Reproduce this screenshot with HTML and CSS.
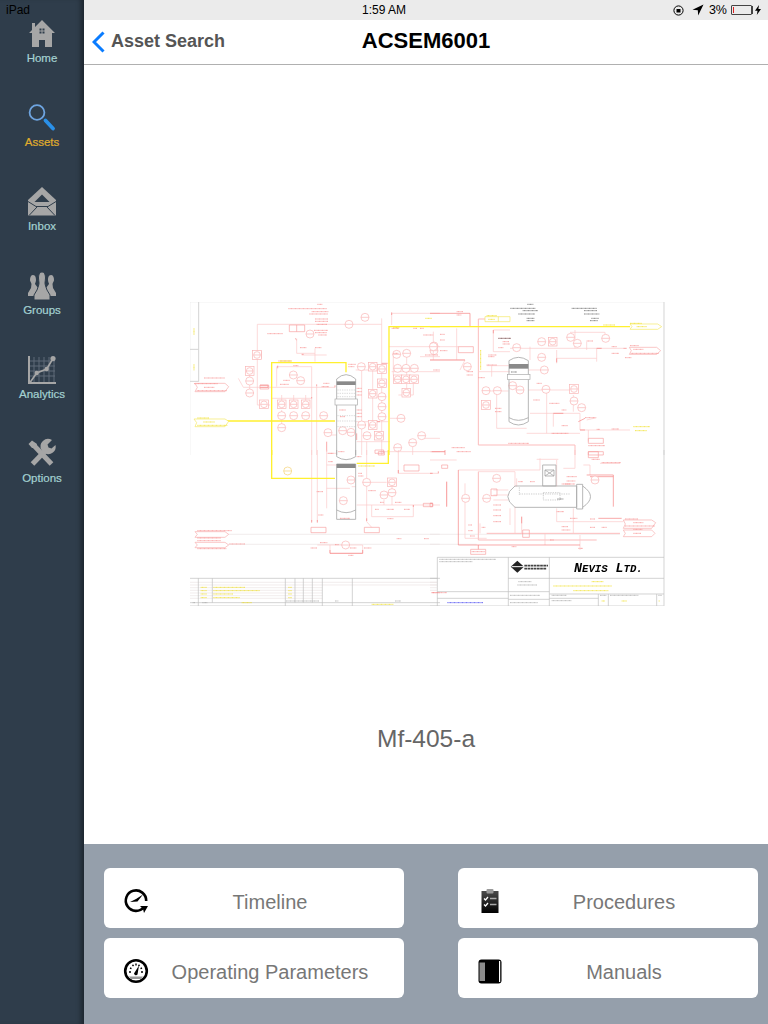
FILE: index.html
```html
<!DOCTYPE html>
<html lang="en">
<head>
    <meta charset="UTF-8">
    <meta name="viewport" content="width=device-width, initial-scale=1.0">
    <title>ACSEM6001</title>
    <link rel="stylesheet" href="styles.css">
</head>
<body>
    <div class="device-name">iPad</div>

    <nav class="sidebar">
        <a class="side-item">
            <svg class="side-icon" viewBox="0 0 28 28">
                <path class="icon-grey" d="M14 0 L27 13 H24 V27 H17 V20 H11 V27 H4 V13 H1 L4 10 V3 H7 V7 Z"/>
                <path class="icon-hole" d="M11.500 8.500h2v2h-2zM14.500 8.500h2v2h-2zM11.500 11.500h2v2h-2zM14.500 11.500h2v2h-2z"/>
            </svg>
            <span class="side-label">Home</span>
        </a>
        <a class="side-item side-item-active">
            <svg class="side-icon" viewBox="0 0 28 28">
                <circle class="search-ring" cx="9" cy="8.500" r="7.400"/>
                <path class="search-handle" d="M17.500 16.500 L25 24.500"/>
            </svg>
            <span class="side-label">Assets</span>
        </a>
        <a class="side-item">
            <svg class="side-icon" viewBox="0 0 28 28">
                <path class="icon-grey" d="M14 -1 L28 12 V27.500 H0 V12 Z"/>
                <path class="icon-hole" d="M14 6.500 L21.500 14 H6.500 Z"/>
                <path class="icon-line" d="M0 13.500 L8 18.500 H20 L28 13.500 M1 27.500 L9 19 M27 27.500 L19 19"/>
            </svg>
            <span class="side-label">Inbox</span>
        </a>
        <a class="side-item">
            <svg class="side-icon" viewBox="0 0 28 28">
                <path class="icon-grey" d="M5 3 C7.500 3 8 6 8 8 C8 10 7 11 7 12 L10 16 L9 24 H0 V21 L3 16 L3.500 12 C3 10 2 9.500 2 8 C2 5 3 3 5 3 Z"/>
                <path class="icon-grey" d="M23 3 C25 3 26 5 26 8 C26 9.500 25 10 24.500 12 L25 16 L28 21 V24 H19 L18 16 L21 12 C21 11 20 10 20 8 C20 6 20.500 3 23 3 Z"/>
                <path class="icon-grey icon-cut" d="M14 0 C16.500 0 17.500 3 17.500 6 C17.500 8 17 9.500 17 11 C17 13 18 15 19 18 L22 23 V28 H6 V23 L9 18 C10 15 11 13 11 11 C11 9.500 10.500 8 10.500 6 C10.500 3 11.500 0 14 0 Z"/>
            </svg>
            <span class="side-label">Groups</span>
        </a>
        <a class="side-item">
            <svg class="side-icon" viewBox="0 0 28 28">
                <path class="icon-grid" d="M6 1V26M11 1V26M16 1V26M21 1V26M26 1V26M1 5H27M1 10H27M1 15H27M1 20H27"/>
                <path class="icon-axis" d="M1 0 V27 H28"/>
                <path class="icon-trend" d="M2 26.500 L8.700 17 L18.700 13 L25 2.500"/>
                <circle class="icon-grey" cx="8.700" cy="17" r="2.200"/>
                <circle class="icon-grey" cx="18.700" cy="13" r="2.200"/>
                <circle class="icon-grey" cx="25" cy="2.500" r="2.600"/>
            </svg>
            <span class="side-label">Analytics</span>
        </a>
        <a class="side-item">
            <svg class="side-icon" viewBox="0 0 28 28">
                <path class="icon-tool" d="M5 4.500 L23.500 24"/>
                <path class="icon-grey" d="M0.500 4 L4 0.500 L9 4 L8 8 L4 8 Z"/>
                <path class="icon-tool" d="M4.500 24 L18 10"/>
                <path class="icon-grey" d="M27.500 5 A7.500 7.500 0 0 1 17 13.500 L13.500 10 A7.500 7.500 0 0 1 24 0 L19.500 4.500 L20.500 7.500 L23.500 8.500 Z"/>
            </svg>
            <span class="side-label">Options</span>
        </a>
    </nav>

    <main class="main">
        <header class="status-bar">
            <span class="status-time">1:59 AM</span>
            <div class="status-right">
                <svg class="status-lock" width="11" height="11" viewBox="0 0 11 11">
                    <circle class="lock-ring" cx="5.500" cy="5.500" r="4.600"/>
                    <rect class="lock-body" x="3.500" y="4" width="4" height="3.500"/>
                </svg>
                <svg class="status-arrow" width="12" height="12" viewBox="0 0 12 12">
                    <path d="M11.500 0.500 L0.500 5.800 L5.800 6.200 L6.200 11.500 Z"/>
                </svg>
                <span class="status-pct">3%</span>
                <div class="battery"><span class="battery-level"></span></div>
                <svg class="status-bolt" width="6" height="10" viewBox="0 0 6 10">
                    <path d="M4 0 L0 5.800 H2.500 L1.800 10 L6 4 H3.400 Z"/>
                </svg>
            </div>
        </header>

        <div class="nav-bar">
            <a class="nav-back">
                <svg class="back-icon" width="13" height="22" viewBox="0 0 13 22">
                    <path d="M11.500 1.500 L2 11 L11.500 20.500"/>
                </svg>
                <span>Asset Search</span>
            </a>
            <h1 class="nav-title">ACSEM6001</h1>
            <div></div>
        </div>

        <section class="drawing">
            <!-- each g below uses coordinates 3x page size, origin at the corner of that quarter -->
            <svg class="pid" width="476" height="304" viewBox="190 302 476 304">
                <defs>
                    <g id="i"><circle r="12"/><path d="M-12 0H12"/></g>
                    <g id="s"><rect x="-13" y="-13" width="26" height="26"/><circle r="10"/><path d="M-10 0H10"/></g>
                </defs>
                <rect class="pid-paper" x="190" y="302" width="476" height="304"/>

                <g transform="translate(180 295) scale(.33333)">
                    <path class="pid-frame" d="M29 480 V20 H780 M56 20 V260 M29 163 H56 M29 259 H56"/>
                    <path class="pid-line" d="M232 88 H605 M232 88 V330 H270 M605 70 V480 M175 250 L190 277 H465 M209 240 V300 M290 215 H395 V275 M290 215 V275 M405 200 V160 M350 130 V175 H405 M365 180 H440 M395 275 V480 M410 275 V480 M275 310 H395 M305 300 V340 M341 300 V340 M377 300 V340 M305 345 V390 M527 225 H605 M527 380 H625 M630 370 H660 M627 155 H780 M635 55 V90 M635 55 H780 M640 180 V240 M635 230 H780 M655 300 H700 V250 M720 185 H780 M530 440 H630 M600 470 H780 M440 475 H470 M545 225 V480 M578 225 V400 M680 175 V290 M560 440 V480 M725 430 H780 M698 450 V480 M440 420 H470"/>
                    <path class="pid-tag" d="M45 265 H135 L146 275 L135 290 H45 L52 277 Z"/>
                    <path class="pid-dark" d="M293 212 v8 M410 268 v6 M635 52 v8 M345 130 l5 5 M365 178 h6 M240 277 h24 v-6 h-24 M465 277 v-6 M395 310 v-4 M605 205 h18 M580 380 h20 M530 415 v20 M440 440 v30"/>
                    <path class="pid-box" d="M328 90 h46 v20 h-46 Z M350 90 v20 M220 170 h24 v20 h-24 Z M240 270 h26 v12 h-26 Z M595 470 h18 v10 h-18 Z"/>
                    <g class="pid-inst">
                        <use href="#i" x="209" y="258"/><use href="#i" x="209" y="294"/><use href="#i" x="341" y="362"/><use href="#i" x="305" y="362"/><use href="#i" x="377" y="362"/><use href="#i" x="305" y="398"/><use href="#i" x="431" y="362"/><use href="#i" x="340" y="240"/><use href="#i" x="362" y="257"/><use href="#i" x="544" y="215"/><use href="#i" x="606" y="305"/><use href="#i" x="606" y="335"/><use href="#i" x="606" y="365"/><use href="#i" x="545" y="390"/><use href="#i" x="663" y="370"/><use href="#i" x="561" y="422"/><use href="#i" x="653" y="220"/><use href="#i" x="678" y="220"/><use href="#i" x="703" y="220"/><use href="#i" x="650" y="178"/><use href="#i" x="680" y="175"/><use href="#i" x="762" y="153"/><use href="#i" x="762" y="167"/><use href="#i" x="444" y="413"/><use href="#i" x="488" y="407"/><use href="#i" x="513" y="412"/><use href="#i" x="725" y="422"/><use href="#i" x="698" y="443"/><use href="#i" x="653" y="458"/><use href="#i" x="507" y="88"/><use href="#i" x="555" y="67"/><use href="#i" x="390" y="117"/>
                        <use href="#s" x="231" y="180"/><use href="#s" x="209" y="228"/><use href="#s" x="252" y="328"/><use href="#s" x="305" y="328"/><use href="#s" x="341" y="328"/><use href="#s" x="377" y="328"/><use href="#s" x="578" y="215"/><use href="#s" x="606" y="222"/><use href="#s" x="606" y="265"/><use href="#s" x="578" y="296"/><use href="#s" x="578" y="390"/><use href="#s" x="597" y="422"/><use href="#s" x="653" y="253"/><use href="#s" x="678" y="253"/><use href="#s" x="702" y="253"/><use href="#s" x="679" y="293"/>
                    </g>
                    <path class="pid-vessel" d="M470 480 V252 Q498 226 527 252 V480"/>
                    <rect class="pid-band" x="470" y="259" width="57" height="11"/>
                    <path class="pid-trays" d="M472 285 H525 M472 295 H525 M472 305 H525 M472 362 H525 M472 378 H525 M472 395 H525"/>
                    <rect class="pid-flange" x="465" y="312" width="68" height="18"/>
                    <path class="pid-yellow" d="M275 480 V203 H498 V232 M140 378 H465 M627 480 V95 H780"/>
                    <path class="pid-tag-y" d="M42 372 H135 L146 379 L135 395 H45 L50 383 Z"/>
                    <path class="pid-note" d="M412 28 h16 M325 41 h115 M395 50 h50 M388 57 h55 M405 72 h40 M405 79 h40 M410 88 h32 M402 106 h42 M405 113 h35 M415 120 h26 M262 116 h46 M72 249 h62 M42 266 h72 M72 277 h32 M50 287 h90 M295 198 h40 M505 208 h22 M505 215 h18 M430 265 h18 M310 256 h20 M300 268 h26 M478 345 h20 M480 365 h16 M425 275 h22 M530 280 h16 M530 290 h16 M530 300 h16 M530 345 h16 M530 355 h16 M530 365 h16 M640 175 h16 M735 180 h40 M760 225 h20 M730 120 h30 M635 100 h22 M700 100 h12 M720 100 h12 M340 212 h16 M360 158 h20 M405 158 h20 M475 470 h18"/>
                    <path class="pid-note-y" d="M42 100 v20 M42 208 v18 M52 369 h36 M70 381 h34 M52 391 h90 M736 70 h20 M640 98 h18 M300 198 h35"/>
                </g>

                <g transform="translate(430 295) scale(.33333)">
                    <path class="pid-frame" d="M-30 20 H702 V480"/>
                    <path class="pid-pink" d="M145 72 V450 H435 V480 M145 72 H165"/>
                    <path class="pid-line" d="M190 105 V170 H240 M190 105 H240 M420 112 H525 V125 M240 160 H580 M300 155 V195 M500 160 V200 M380 190 H500 M380 165 V205 M470 140 V165 M0 195 H105 L90 225 M295 225 H340 M170 212 H240 M185 212 V245 M145 230 H240 M200 287 V400 H290 M300 355 H450 V405 M350 285 V415 M290 415 H450 M295 285 H420 M450 405 H600 M370 355 V395 M475 405 V440 M470 375 L500 368 M80 100 V195 M10 110 V195 M435 105 V160 M430 300 V350 M0 155 H85 M0 470 H45 M160 288 H235"/>
                    <path class="pid-dark" d="M0 55 H120 V95 M0 195 H105 M190 105 v10 M580 160 h10 M370 355 h30 M445 380 l20 -10 M450 405 h15 M380 190 v12 M500 160 h15"/>
                    <path class="pid-box" d="M85 155 h45 v18 h-45 Z M475 430 h45 v15 h-45 Z M475 470 h45 v10 h-45 Z"/>
                    <path class="pid-tag" d="M598 157 H680 L692 167 L680 178 H598 L604 167 Z"/>
                    <g class="pid-inst">
                        <use href="#i" x="10" y="155"/><use href="#i" x="260" y="158"/><use href="#i" x="335" y="140"/><use href="#i" x="335" y="187"/><use href="#i" x="422" y="127"/><use href="#i" x="442" y="145"/><use href="#i" x="527" y="130"/><use href="#i" x="432" y="318"/><use href="#i" x="455" y="338"/><use href="#i" x="348" y="283"/><use href="#i" x="168" y="287"/><use href="#i" x="202" y="287"/><use href="#i" x="248" y="272"/><use href="#i" x="270" y="285"/><use href="#i" x="343" y="225"/><use href="#i" x="112" y="215"/>
                        <use href="#s" x="368" y="140"/><use href="#s" x="432" y="282"/><use href="#s" x="168" y="330"/>
                    </g>
                    <path class="pid-vessel" d="M237 197 Q265 177 295 197 V380 Q265 400 237 380 Z M237 368 Q265 384 295 368"/>
                    <rect class="pid-band" x="237" y="207" width="58" height="14"/>
                    <rect class="pid-flange" x="232" y="238" width="68" height="16"/>
                    <path class="pid-yellow" d="M0 95 H600"/>
                    <path class="pid-tag-y" d="M600 87 H683 L695 95 L683 103 H600 L606 95 Z"/>
                    <path class="pid-y-thin" d="M165 65 H240 V80 H165 Z M205 65 V80"/>
                    <path class="pid-note" d="M80 50 h20 M80 60 h14 M30 118 h14 M30 135 h14 M30 167 h22 M205 130 h38 M218 140 h20 M218 147 h22 M205 158 h16 M175 180 h25 M175 185 h18 M110 230 h20 M110 240 h18 M170 210 h30 M145 248 h20 M320 265 h16 M310 315 h20 M358 325 h30 M395 345 h14 M395 392 h18 M365 415 h50 M545 155 h15 M545 175 h22 M585 188 h20 M470 138 h20 M465 368 h32 M500 403 h10 M545 402 h22 M475 452 h50 M235 445 h62 M65 458 h40 M80 470 h42 M195 340 h20 M195 350 h20 M600 152 h26 M610 163 h30 M602 175 h85"/>
                    <path class="pid-note-k" d="M292 28 h18 M241 40 h75 M278 47 h46 M265 57 h50 M290 70 h24 M290 77 h24 M425 40 h75 M462 47 h40 M462 57 h46 M484 70 h22 M480 77 h24 M205 130 h38 M243 231 h18"/>
                    <path class="pid-note-y" d="M152 165 v60 M170 62 h30 M175 73 h20 M600 85 h35 M620 95 h30 M520 90 h35 M610 395 h50 M615 407 h35"/>
                </g>

                <g transform="translate(180 450) scale(.33333)">
                    <path class="pid-frame" d="M28 0 V468 H780"/>
                    <path class="pid-pale" d="M145 253 H780 M145 283 H780 M28 397 H772 M28 405 H772 M28 413 H427 M28 421 H427 M28 429 H427 M28 437 H427 M28 445 H427"/>
                    <path class="pid-grid" d="M28 385 H780 M28 458 H780 M55 385 V468 M97 385 V458 M316 385 V468 M345 385 V458 M370 385 V458 M397 385 V458 M427 385 V468 M517 385 V468"/>
                    <path class="pid-line" d="M395 0 V215 M412 0 V215 M440 0 V175 M560 0 V215 L575 232 M530 165 H780 M575 165 V200 H700 V165 M655 0 V70 H775 M570 97 H620 M515 110 H527 M440 45 H470 M440 115 H510 M636 110 V165 M612 150 V165 M450 285 V310 H548 V285 M412 285 H548"/>
                    <path class="pid-dark" d="M395 210 v8 M412 210 v8 M560 205 v8 M700 165 v6 M775 70 v-6 M450 300 v10 h98 v-10 M655 60 v10"/>
                    <path class="pid-box" d="M393 232 h45 v16 h-45 Z M553 232 h45 v16 h-45 Z M730 160 h28 v10 h-28 Z M672 45 h45 v18 h-45 Z M585 0 h26 v10 h-26 Z"/>
                    <path class="pid-tag" d="M45 245 H135 L146 253 L135 262 H45 L52 253 Z M45 277 H135 L146 285 L135 293 H45 L52 285 Z"/>
                    <g class="pid-inst">
                        <use href="#i" x="513" y="90"/><use href="#i" x="490" y="152"/><use href="#i" x="560" y="97"/><use href="#i" x="636" y="128"/><use href="#i" x="612" y="135"/><use href="#i" x="497" y="285"/>
                        <use href="#s" x="636" y="97"/>
                    </g>
                    <path class="pid-vessel" d="M470 0 V20 Q498 38 527 20 V0 M470 42 H527 V208 H470 Z M470 180 Q498 196 527 180"/>
                    <rect class="pid-band" x="470" y="42" width="57" height="12"/>
                    <path class="pid-yellow" d="M275 0 V85 H465 M625 0 V40 H530"/>
                    <g class="pid-inst-y"><use href="#i" x="323" y="63"/></g>
                    <path class="pid-note" d="M52 242 h104 M52 264 h70 M52 272 h70 M52 296 h88 M148 282 h48 M420 278 h22 M392 294 h20 M465 284 h12 M510 294 h20 M552 294 h22 M505 316 h16 M445 10 h16 M445 35 h14 M530 20 h14 M535 70 h12 M535 78 h16 M565 122 h22 M600 157 h12 M645 157 h20 M585 178 h12 M620 178 h22 M672 178 h18 M622 206 h18 M650 266 h14 M732 266 h14 M410 125 h20 M415 195 h16 M480 205 h30 M755 428 h25"/>
                    <path class="pid-note-y" d="M62 412 h18 M62 422 h18 M62 432 h18 M62 443 h18 M100 412 h95 M100 422 h140 M100 432 h60 M100 443 h80 M325 412 h10 M325 422 h10 M325 432 h10 M325 443 h10 M185 458 h30 M575 463 h65 M535 48 h50"/>
                    <path class="pid-note-g" d="M38 458 h8 M67 458 h16 M318 453 h100 M465 453 h10 M645 453 h18"/>
                </g>

                <g transform="translate(430 450) scale(.33333)">
                    <path class="pid-frame" d="M0 468 H702 V0"/>
                    <path class="pid-pale" d="M0 253 H570 M0 283 H140"/>
                    <path class="pid-pink" d="M145 65 V270 H500 M170 250 H570"/>
                    <path class="pid-line" d="M85 60 H330 M330 25 V60 M0 30 H80 M50 95 V170 M105 100 V265 H170 M460 45 H480 V75 M510 40 H570 M435 0 V55 M400 55 H435 M380 30 V110 M320 28 H385 M260 85 V110 M255 170 V250 M380 175 V215 H580 M240 175 V225 M275 200 V250 M150 220 V250 M190 120 H235 M190 135 H235 M190 150 H235 M145 65 H255 V110 M345 250 V285 M450 255 V300 M430 175 V250"/>
                    <path class="pid-dark" d="M85 60 V285 H450 M470 75 H550 V170 M480 80 H550 M50 95 V170 M0 160 h8 M145 285 V298 M275 200 v20 M0 70 h8 M45 0 v15 M5 5 l40 0 M505 205 h70"/>
                    <path class="pid-box" d="M122 298 h45 v15 h-45 Z M475 5 h30 v18 h-30 Z M183 117 h18 v20 h-18 Z M278 240 h20 v22 h-20 Z M35 45 h18 v10 h-18 Z M0 160 h8 v10 h-8 Z"/>
                    <path class="pid-tag" d="M580 210 H665 L677 218 L665 235 H580 L586 222 Z M580 240 H665 L675 250 L665 260 H580 L586 250 Z"/>
                    <g class="pid-inst">
                        <use href="#i" x="107" y="145"/><use href="#i" x="170" y="145"/><use href="#i" x="200" y="85"/><use href="#i" x="495" y="90"/>
                    </g>
                    <path class="pid-vessel" d="M255 108 H440 V172 H255 Q212 140 255 108 Z M440 103 H458 V177 H440 Z M458 108 Q505 140 458 172 M338 45 H378 V108 H338 Z M345 60 L372 78 M372 60 L345 78 M345 60 H372 V78 H345 Z"/>
                    <path class="pid-dashed" d="M340 128 H390 V150 H340 Z M268 132 H420 M268 112 V135"/>
                    <path class="pid-grid" d="M22 322 H702 M22 322 V468 M22 425 H235 M22 445 H235 M235 322 V468 M358 322 V468 M235 385 H702 M358 432 H702 M358 445 H505 M505 432 V468 M535 432 V468 M680 432 V468 M0 385 H22 M235 425 H358 M235 448 H358"/>
                    <path class="pid-pale" d="M0 397 H22 M0 405 H22 M0 413 H22 M0 421 H22"/>
                    <path class="pid-logo" d="M262 332 L282 350 L262 368 L242 350 Z"/>
                    <path class="pid-logo-cut" d="M245 350 H285"/>
                    <path class="pid-logo-text" d="M283 347 H354 M283 356 H350"/>
                    <text class="pid-company" x="432" y="367">N<tspan class="pid-company-small">EVIS</tspan> L<tspan class="pid-company-small">TD.</tspan></text>
                    <path class="pid-note-g" d="M28 328 h170 M28 335 h100 M265 395 h40 M262 405 h60 M240 436 h90 M240 458 h84 M365 436 h45 M365 452 h60 M510 436 h20 M540 436 h85 M685 436 h10"/>
                    <path class="pid-note" d="M5 428 h46 M380 185 h22 M420 205 h22 M395 230 h20 M395 240 h26 M480 207 h16 M480 232 h16 M515 232 h16 M485 28 h25 M515 38 h58 M190 165 h24 M190 180 h24 M190 197 h24 M190 215 h24 M155 232 h12 M115 225 h12 M115 242 h14 M120 258 h14 M125 305 h40 M585 207 h40 M585 228 h90 M610 218 h30 M610 238 h28 M610 250 h24 M360 270 h12 M245 290 h14 M445 295 h14 M300 95 h14 M265 95 h14 M395 102 h26 M410 80 h30 M410 93 h26 M405 102 h30"/>
                    <path class="pid-note-k" d="M382 147 h18"/>
                    <path class="pid-note-y" d="M485 395 h35 M370 408 h175 M430 422 h105 M575 453 h15 M515 453 h10 M686 453 h4"/>
                    <path class="pid-note-b" d="M52 458 h108"/>
                </g>
            </svg>
            <p class="drawing-name">Mf-405-a</p>
        </section>

        <section class="actions">
            <a class="action">
                <span class="action-icon">
                    <svg width="26" height="26" viewBox="0 0 26 26">
                        <path class="ico-stroke" d="M21 19 A10.200 10.200 0 1 1 23.200 13"/>
                        <path class="ico-solid" d="M17 18 H25 L21 25 L20 21 Z"/>
                        <path class="ico-solid" d="M13 11 L20 6.500 L14.500 13.500 Z M14.500 13.500 L7 14 L13 11 Z"/>
                    </svg>
                </span>
                <span class="action-label">Timeline</span>
            </a>
            <a class="action">
                <span class="action-icon">
                    <svg width="18" height="24" viewBox="0 0 18 24">
                        <defs>
                            <linearGradient id="board" x1="0" y1="0" x2="0" y2="1">
                                <stop offset="0" stop-color="#4a4a4a"/>
                                <stop offset="1" stop-color="#000"/>
                            </linearGradient>
                        </defs>
                        <rect x="0.500" y="2" width="17" height="22" fill="url(#board)"/>
                        <rect class="ico-clip" x="5.500" y="0" width="7" height="4.500" rx="1"/>
                        <path class="ico-check" d="M3 9.500 L4.500 11 L7 8 M3 15.500 L4.500 17 L7 14"/>
                        <path class="ico-rule" d="M9 9.500 H15.500 M9 15.500 H15.500"/>
                    </svg>
                </span>
                <span class="action-label">Procedures</span>
            </a>
            <a class="action">
                <span class="action-icon">
                    <svg width="26" height="26" viewBox="0 0 26 26">
                        <circle class="ico-stroke" cx="13" cy="13" r="10.800"/>
                        <path class="ico-band" d="M6 18.500 H20 L18 21 H8 Z"/>
                        <path class="ico-dots" d="M6 14 h2 M7 10 l1.500 .7 M9.500 6.800 l1 1.300 M13 5.500 v2 M16.500 6.800 l-1 1.300 M19 10 l-1.500 .7 M20 14 h-2"/>
                        <path class="ico-solid" d="M11 15.500 L16 7.500 L14.500 16.500 A2 2 0 0 1 11 15.500 Z"/>
                    </svg>
                </span>
                <span class="action-label">Operating Parameters</span>
            </a>
            <a class="action">
                <span class="action-icon">
                    <svg width="24" height="25" viewBox="0 0 24 25">
                        <rect class="ico-book" x="0.500" y="0.500" width="23" height="24" rx="3"/>
                        <rect class="ico-gap" x="21" y="2" width="1.200" height="21"/>
                        <rect class="ico-spine" x="1.500" y="3.500" width="5.500" height="18.500"/>
                    </svg>
                </span>
                <span class="action-label">Manuals</span>
            </a>
        </section>
    </main>
</body>
</html>
```

FILE: styles.css
```css
* {
    box-sizing: border-box;
}
body {
    margin: 0;
    width: 768px;
    height: 1024px;
    overflow: hidden;
    display: flex;
    position: relative;
    font-family: "Liberation Sans", Arial, sans-serif;
    background: #fff;
}
.device-name {
    position: absolute;
    top: 3px;
    left: 6px;
    font-size: 12px;
    line-height: 14px;
    color: #000;
}

/* left menu */
.sidebar {
    width: 84px;
    flex: none;
    padding-top: 20px;
    background: #2f3d4b;
    box-shadow: inset -6px 0 5px -3px rgba(0, 0, 0, 0.4);
}
.side-item {
    height: 84px;
    display: flex;
    flex-direction: column;
    align-items: center;
}
.side-icon {
    width: 28px;
    height: 28px;
    overflow: visible;
}
.side-label {
    margin-top: 3px;
    font-size: 11.500px;
    line-height: 14px;
    color: #a4d2d2;
    -webkit-text-stroke: 0.2px #a4d2d2;
}
.side-item-active .side-label {
    color: #e0ae2c;
    -webkit-text-stroke-color: #e0ae2c;
}
.icon-grey {
    fill: #a6a6a6;
}
.icon-hole {
    fill: #2f3d4b;
}
.icon-line {
    fill: none;
    stroke: #2f3d4b;
    stroke-width: 1;
}
.icon-cut {
    stroke: #2f3d4b;
    stroke-width: 1;
}
.icon-grid {
    fill: none;
    stroke: #5f6b78;
    stroke-width: 1;
}
.icon-axis {
    fill: none;
    stroke: #a6a6a6;
    stroke-width: 2;
}
.icon-trend {
    fill: none;
    stroke: #a6a6a6;
    stroke-width: 1.600;
}
.icon-tool {
    fill: none;
    stroke: #a6a6a6;
    stroke-width: 5;
}
.search-ring {
    fill: none;
    stroke: #6ea4e0;
    stroke-width: 1.800;
}
.search-handle {
    fill: none;
    stroke: #2a90e8;
    stroke-width: 3.800;
    stroke-linecap: round;
}

/* right side */
.main {
    flex: 1;
    min-width: 0;
    display: flex;
    flex-direction: column;
}
.status-bar {
    height: 20px;
    flex: none;
    display: flex;
    align-items: center;
    background: #ebebeb;
    font-size: 12px;
    color: #000;
}
.status-time {
    width: 400px;
    flex: none;
    margin-left: 100px;
    text-align: center;
}
.status-right {
    margin-left: auto;
    display: flex;
    align-items: center;
    padding-right: 7px;
}
.status-lock {
    margin-right: 8px;
}
.lock-ring {
    fill: none;
    stroke: #000;
    stroke-width: 1;
}
.lock-body {
    fill: #000;
}
.status-arrow {
    margin-right: 5px;
}
.status-pct {
    font-size: 12.500px;
    margin-right: 4px;
}
.battery {
    width: 21px;
    height: 10px;
    padding: 1px;
    border: 1px solid #444;
    border-radius: 1px;
    margin-right: 3px;
    box-shadow: 2px 0 0 -1px #444;
}
.battery-level {
    display: block;
    width: 1px;
    height: 100%;
    background: #e02020;
}
.nav-bar {
    height: 45px;
    flex: none;
    display: grid;
    grid-template-columns: 1fr auto 1fr;
    align-items: center;
    padding-bottom: 3px;
    background: #fff;
    border-bottom: 1px solid #b0b0b0;
}
.nav-back {
    display: flex;
    align-items: center;
    padding: 2px 0 0 8px;
    font-size: 18px;
    font-weight: bold;
    color: #555;
}
.back-icon {
    margin-right: 6px;
}
.back-icon path {
    fill: none;
    stroke: #0a7cff;
    stroke-width: 3;
}
.nav-title {
    margin: 0;
    font-size: 22px;
    font-weight: bold;
    color: #000;
}

/* drawing */
.drawing {
    flex: 1;
    display: flex;
    flex-direction: column;
    align-items: center;
    padding-top: 237px;
}
.pid {
    display: block;
    flex: none;
    margin-left: 4px;
    filter: blur(0.45px);
}
.drawing-name {
    margin: 119px 0 0;
    font-size: 24.500px;
    line-height: 28px;
    color: #666;
}
.pid-paper {
    fill: #fff;
}
.pid-frame {
    fill: none;
    stroke: #d4d4d4;
    stroke-width: 3;
}
.pid-grid {
    fill: none;
    stroke: #bcbcbc;
    stroke-width: 2;
}
.pid-pale {
    fill: none;
    stroke: #ece4e4;
    stroke-width: 2;
}
.pid-line {
    fill: none;
    stroke: #fcc8c8;
    stroke-width: 2;
}
.pid-pink {
    fill: none;
    stroke: #fcbcbc;
    stroke-width: 3;
}
.pid-dark {
    fill: none;
    stroke: #f68080;
    stroke-width: 2;
}
.pid-box {
    fill: none;
    stroke: #f8a0a0;
    stroke-width: 2;
}
.pid-tag {
    fill: #fff;
    stroke: #f8acac;
    stroke-width: 2;
}
.pid-tag-y {
    fill: #fff;
    stroke: #f4e860;
    stroke-width: 2;
}
.pid-inst {
    fill: #fff;
    stroke: #f9b4b4;
    stroke-width: 2;
}
.pid-inst-y {
    fill: #fff;
    stroke: #f4d070;
    stroke-width: 2;
}
.pid-vessel {
    fill: none;
    stroke: #a8a8a8;
    stroke-width: 2.500;
}
.pid-band {
    fill: #8a8a8a;
}
.pid-trays {
    fill: none;
    stroke: #c8c8c8;
    stroke-width: 2;
    stroke-dasharray: 4 3;
}
.pid-flange {
    fill: #fff;
    stroke: #a8a8a8;
    stroke-width: 2;
}
.pid-dashed {
    fill: none;
    stroke: #b8b8b8;
    stroke-width: 2;
    stroke-dasharray: 4 3;
}
.pid-yellow {
    fill: none;
    stroke: #fff030;
    stroke-width: 4;
}
.pid-y-thin {
    fill: none;
    stroke: #f4e860;
    stroke-width: 2;
}
.pid-note,
.pid-note-y,
.pid-note-k,
.pid-note-g,
.pid-note-b {
    fill: none;
    stroke-width: 3;
    stroke-dasharray: 3 1;
    opacity: 0.8;
}
.pid-note {
    stroke: #f79090;
}
.pid-note-y {
    stroke: #f0e020;
}
.pid-note-k {
    stroke: #666;
}
.pid-note-g {
    stroke: #aaa;
}
.pid-note-b {
    stroke: #3c3cf0;
}
.pid-logo {
    fill: #222;
}
.pid-logo-cut {
    fill: none;
    stroke: #fff;
    stroke-width: 3;
}
.pid-logo-text {
    fill: none;
    stroke: #444;
    stroke-width: 5;
    stroke-dasharray: 8 1.500;
}
.pid-company {
    font-family: "Liberation Mono", monospace;
    font-size: 40px;
    font-weight: bold;
    font-style: italic;
    fill: #000;
}
.pid-company-small {
    font-size: 32px;
}

/* bottom buttons */
.actions {
    height: 180px;
    flex: none;
    display: grid;
    grid-template-columns: 300px 300px;
    grid-auto-rows: 60px;
    column-gap: 54px;
    row-gap: 10px;
    padding: 24px 20px 0;
    background: #959fab;
}
.action {
    display: flex;
    align-items: center;
    padding: 6px 32px 0 0;
    background: #fff;
    border-radius: 6px;
}
.action-icon {
    width: 64px;
    flex: none;
    display: flex;
    justify-content: center;
}
.action-label {
    flex: 1;
    padding-top: 2px;
    text-align: center;
    font-size: 20px;
    color: #777;
}
.ico-stroke {
    fill: none;
    stroke: #000;
    stroke-width: 2.600;
}
.ico-solid {
    fill: #000;
}
.ico-clip {
    fill: #999;
}
.ico-check {
    fill: none;
    stroke: #fff;
    stroke-width: 1.300;
}
.ico-rule {
    fill: none;
    stroke: #aaa;
    stroke-width: 1.600;
}
.ico-band {
    fill: #999;
}
.ico-dots {
    fill: none;
    stroke: #000;
    stroke-width: 1.400;
}
.ico-book {
    fill: #000;
}
.ico-gap {
    fill: #fff;
}
.ico-spine {
    fill: #8c8c8c;
}
```
